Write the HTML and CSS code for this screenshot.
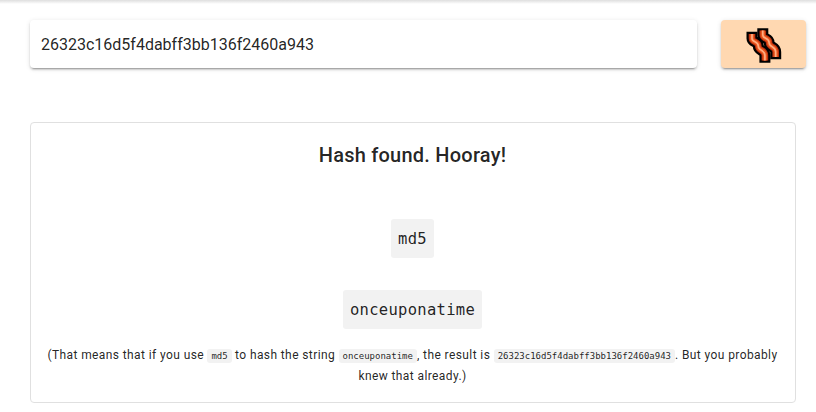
FILE: index.html
```html
<!DOCTYPE html>
<html lang="en">
<head>
<meta charset="utf-8">
<title>Hash lookup</title>
<link rel="stylesheet" href="styles.css">
</head>
<body>
<header class="bar"></header>
<main class="page">
  <form class="search">
    <div class="field">26323c16d5f4dabff3bb136f2460a943</div>
    <button class="submit" type="button" aria-label="Look up">
      <svg class="bacon" viewBox="0 0 36 36" width="36" height="36" fill="none">
        <defs>
          <path id="strip" d="M6 7V11.5C6 15.5 12.3 14 12.3 19C12.3 24.5 18.9 22 18.9 28.5V33.5"/>
          <g id="rasher">
            <path d="M6 4.7V11.5C6 15.5 12.3 14 12.3 19C12.3 24.5 18.9 22 18.9 28.5V35.7" stroke="#000" stroke-width="11"/>
            <use href="#strip" stroke="#b92d0d" stroke-width="6.6"/>
            <use href="#strip" stroke="#e8571e" stroke-width="4.4"/>
            <use href="#strip" stroke="#ffac82" stroke-width="1.7"/>
          </g>
        </defs>
        <use href="#rasher" x="10.8" y="-3.4"/>
        <use href="#rasher"/>
      </svg>
    </button>
  </form>
  <section class="card">
    <h1 class="title">Hash found. Hooray!</h1>
    <div class="result"><code>md5</code></div>
    <div class="result"><code>onceuponatime</code></div>
    <p class="note">(That means that if you use <code>md5</code> to hash the string <code>onceuponatime</code>, the result is <code>26323c16d5f4dabff3bb136f2460a943</code>. But you probably knew that already.)</p>
  </section>
</main>
</body>
</html>
```
FILE: styles.css
```css
* { box-sizing: border-box; }
body {
  margin: 0;
  background: #fff;
  color: rgba(0, 0, 0, .87);
  font-family: Roboto, sans-serif;
  overflow: hidden;
}
.bar {
  height: 4px;
  background: linear-gradient(#dedede, #fff);
}
.page { padding: 16px 10px 0 30px; }
.search { display: flex; gap: 24px; }
.field, .submit {
  height: 48px;
  border-radius: 4px;
  box-shadow: 0 3px 1px -2px rgba(0, 0, 0, .2), 0 2px 2px rgba(0, 0, 0, .14), 0 1px 5px rgba(0, 0, 0, .12);
}
.field {
  width: 667px;
  padding: 1px 11px 0;
  font-size: 16px;
  line-height: 48px;
}
.submit {
  display: flex;
  align-items: center;
  justify-content: center;
  width: 85px;
  padding: 0;
  border: 0;
  background: #ffd8b1;
}
.bacon { display: block; margin-top: 2px; }
.card {
  width: 766px;
  height: 281px;
  margin-top: 54px;
  padding: 16px 17px 16px 16px;
  border: 1px solid #e0e0e0;
  border-radius: 4px;
  text-align: center;
}
.title {
  margin: 0 0 48px;
  font-size: 20px;
  font-weight: 500;
  line-height: 32px;
  letter-spacing: .23px;
}
code {
  background: #f2f2f2;
  border-radius: 3px;
  font-family: "DejaVu Sans Mono", monospace;
}
.result {
  display: flex;
  justify-content: center;
  margin-bottom: 32px;
}
.result code {
  height: 39px;
  padding: 1px 7px 0;
  font-size: 15.5px;
  line-height: 39px;
  letter-spacing: .29px;
}
.note {
  margin: -16px 0 0;
  font-size: 12px;
  line-height: 20.6px;
  letter-spacing: .4px;
}
.note code {
  padding: 2px 4px;
  font-size: 9px;
  line-height: 1;
  letter-spacing: 0;
}
```
